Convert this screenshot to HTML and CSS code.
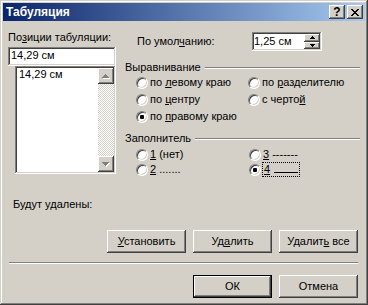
FILE: index.html
```html
<!DOCTYPE html>
<html>
	<head>
		<meta charset="utf-8">
		<title>Табуляция</title>
		<link rel="stylesheet" href="styles.css">
	</head>
	<body>
		<div class="window">
			<header class="titlebar">
				<span class="title">Табуляция</span>
				<div class="caption-buttons">
					<span class="cbtn help">?</span>
					<span class="cbtn">
						<svg width="8" height="7" viewBox="0 0 8 7"><path d="M0 0h2v1H0zM6 0h2v1H6zM1 1h2v1H1zM5 1h2v1H5zM2 2h4v1H2zM3 3h2v1H3zM2 4h4v1H2zM1 5h2v1H1zM5 5h2v1H5zM0 6h2v1H0zM6 6h2v1H6z"/></svg>
					</span>
				</div>
			</header>
			<main class="content">
				<div class="top">
					<section class="tabs">
						<div class="lbl">По<u>з</u>иции табуляции:</div>
						<div class="field edit">14,29 см</div>
						<div class="field listbox">
							<div class="items">14,29 см</div>
							<div class="scrollbar">
								<span class="sbtn">
									<svg width="8" height="5" viewBox="0 0 8 5"><path fill="#fff" d="M4 1h1v1h1v1h1v1h1v1H1V4h1V3h1V2h1z"/><path fill="#808080" d="M3 0h1v1h1v1h1v1h1v1H0V3h1V2h1V1h1z"/></svg>
								</span>
								<span class="track"></span>
								<span class="sbtn">
									<svg width="8" height="5" viewBox="0 0 8 5"><path fill="#fff" d="M1 1h7v1H7v1H6v1H5v1H4V4H3V3H2V2H1z"/><path fill="#808080" d="M0 0h7v1H6v1H5v1H4v1H3V3H2V2H1V1H0z"/></svg>
								</span>
							</div>
						</div>
						<div class="removed">Будут удалены:</div>
					</section>
					<section class="opts">
						<div class="default-row">
							<span class="default-lbl">По умол<u>ч</u>анию:</span>
							<div class="field spin">
								<span class="spin-value">1,25 см</span>
								<div class="spin-btns">
									<span class="sbtn"><svg width="5" height="3" viewBox="0 0 5 3"><path d="M2 0h1v1h1v1h1v1H0V2h1V1h1z"/></svg></span>
									<span class="sbtn"><svg width="5" height="3" viewBox="0 0 5 3"><path d="M0 0h5v1H4v1H3v1H2V2H1V1H0z"/></svg></span>
								</div>
							</div>
						</div>

						<div class="group-title"><span>Выравнивание</span><i class="etch"></i></div>
						<div class="choices align">
							<label class="opt"><span class="radio"></span><span>по <u>л</u>евому краю</span></label>
							<label class="opt"><span class="radio"></span><span>по <u>р</u>азделителю</span></label>
							<label class="opt"><span class="radio"></span><span>по <u>ц</u>ентру</span></label>
							<label class="opt"><span class="radio"></span><span>с черто<u>й</u></span></label>
							<label class="opt"><span class="radio on"></span><span>по <u>п</u>равому краю</span></label>
						</div>

						<div class="group-title fill-title"><span>Заполнитель</span><i class="etch"></i></div>
						<div class="choices fill">
							<label class="opt"><span class="radio"></span><span><u>1</u> (нет)</span></label>
							<label class="opt"><span class="radio"></span><span><u>3</u> -------</span></label>
							<label class="opt"><span class="radio"></span><span><u>2</u> .......</span></label>
							<label class="opt"><span class="radio on"></span><span class="focus"><u>4</u> <span class="blank"></span></span></label>
						</div>
					</section>
				</div>

				<div class="actions">
					<button class="btn"><span><u>У</u>становить</span></button>
					<button class="btn"><span>Уд<u>а</u>лить</span></button>
					<button class="btn"><span>Удалит<u>ь</u> все</span></button>
				</div>
				<hr class="sep">
				<div class="actions dialog">
					<button class="btn default"><span>ОК</span></button>
					<button class="btn"><span>Отмена</span></button>
				</div>
			</main>
		</div>
	</body>
</html>
```

FILE: styles.css
```css
* {
	box-sizing: border-box;
	margin: 0;
	padding: 0;
}
body {
	width: 368px;
	height: 305px;
	overflow: hidden;
	background: #d4d0c8;
	font-family: "Liberation Sans", Arial, sans-serif;
	font-size: 11px;
	line-height: 13px;
	color: #000;
}
u {
	text-decoration: underline;
	text-underline-offset: 1px;
}
svg {
	display: block;
	shape-rendering: crispEdges;
}

/* window frame */
.window {
	display: flex;
	flex-direction: column;
	width: 368px;
	height: 305px;
	padding: 3px;
	background: #d4d0c8;
	box-shadow: inset -1px -1px #404040, inset 1px 1px #d4d0c8, inset -2px -2px #808080, inset 2px 2px #fff;
}
.titlebar {
	display: flex;
	align-items: center;
	height: 18px;
	padding: 0 2px 0 3px;
	background: linear-gradient(to right, #0a246a, #a6caf0);
}
.title {
	flex: 1;
	color: #fff;
	font-weight: bold;
	font-size: 12px;
}
.caption-buttons {
	display: flex;
	gap: 2px;
}
.cbtn {
	display: flex;
	align-items: center;
	justify-content: center;
	width: 16px;
	height: 14px;
	background: #d4d0c8;
	box-shadow: inset -1px -1px #404040, inset 1px 1px #fff, inset -2px -2px #808080;
}
.cbtn.help {
	font-weight: bold;
	font-size: 12px;
	padding-top: 1px;
}

/* body */
.content {
	flex: 1;
	display: flex;
	flex-direction: column;
	padding: 0 5px;
}
.top {
	display: grid;
	grid-template-columns: 108px 1fr;
	column-gap: 9px;
	padding-top: 10px;
}

.field {
	background: #fff;
	padding: 2px;
	box-shadow: inset -1px -1px #fff, inset 1px 1px #808080, inset -2px -2px #d4d0c8, inset 2px 2px #404040;
}
.edit {
	height: 19px;
	margin-top: 3px;
	padding-left: 3px;
}
.listbox {
	display: flex;
	height: 108px;
	margin-left: 7px;
}
.items {
	flex: 1;
	padding: 0 2px;
}
.scrollbar {
	display: flex;
	flex-direction: column;
	width: 16px;
}
.sbtn {
	display: flex;
	align-items: center;
	justify-content: center;
	height: 16px;
	background: #d4d0c8;
	box-shadow: inset -1px -1px #404040, inset 1px 1px #fff, inset -2px -2px #808080;
}
.track {
	flex: 1;
	background-image: repeating-conic-gradient(#fff 0 25%, #d4d0c8 0 50%);
	background-size: 2px 2px;
}
.removed {
	margin: 24px 0 0 5px;
}

.default-row {
	display: flex;
	align-items: center;
	height: 19px;
	margin-top: 1px;
	padding-left: 12px;
}
.default-lbl {
	width: 115px;
}
.spin {
	display: flex;
	width: 70px;
	height: 19px;
}
.spin-value {
	flex: 1;
	line-height: 15px;
}
.spin-btns {
	display: flex;
	flex-direction: column;
	width: 16px;
}
.spin-btns .sbtn {
	flex: 1;
	height: auto;
}

.group-title {
	display: flex;
	align-items: center;
	gap: 4px;
	margin-top: 10px;
}
.fill-title {
	margin-top: 7px;
}
.etch {
	flex: 1;
	height: 2px;
	border-top: 1px solid #808080;
	border-bottom: 1px solid #fff;
}

.choices {
	display: grid;
	grid-template-columns: 112px 1fr;
	grid-auto-rows: 17px;
	padding-left: 11px;
}
.choices.fill {
	grid-template-columns: 113px 1fr;
	grid-auto-rows: 15px;
	margin-top: 2px;
}
.opt {
	display: flex;
	align-items: center;
	gap: 2px;
	white-space: nowrap;
}
.radio {
	flex: none;
	width: 12px;
	height: 12px;
	border-radius: 50%;
	background: #fff;
	border: 1px solid;
	border-color: #808080 #fff #fff #808080;
	box-shadow: inset 1px 1px #404040, inset -1px -1px #d4d0c8;
}
.radio.on::after {
	content: '';
	display: block;
	width: 4px;
	height: 4px;
	margin: 3px;
	background: #000;
	border-radius: 1px;
}
.focus {
	outline: 1px dotted #000;
	padding: 0 1px;
}
.blank {
	display: inline-block;
	width: 24px;
	height: 9px;
	margin-left: 1px;
	border-bottom: 1px solid #000;
}

/* buttons */
.actions {
	display: flex;
	justify-content: flex-end;
	gap: 7px;
	margin: 19px 2px 0 0;
}
.actions.dialog {
	margin-top: 11px;
}
.btn {
	display: flex;
	align-items: center;
	justify-content: center;
	width: 79px;
	height: 23px;
	border: none;
	background: #d4d0c8;
	font: inherit;
	color: #000;
	box-shadow: inset -1px -1px #404040, inset 1px 1px #fff, inset -2px -2px #808080;
}
.btn.default {
	box-shadow: inset 0 0 0 1px #000, inset -2px -2px #404040, inset 2px 2px #fff, inset -3px -3px #808080;
}
.sep {
	height: 2px;
	margin: 9px 2px 0 1px;
	border: none;
	border-top: 1px solid #808080;
	border-bottom: 1px solid #fff;
}
```
